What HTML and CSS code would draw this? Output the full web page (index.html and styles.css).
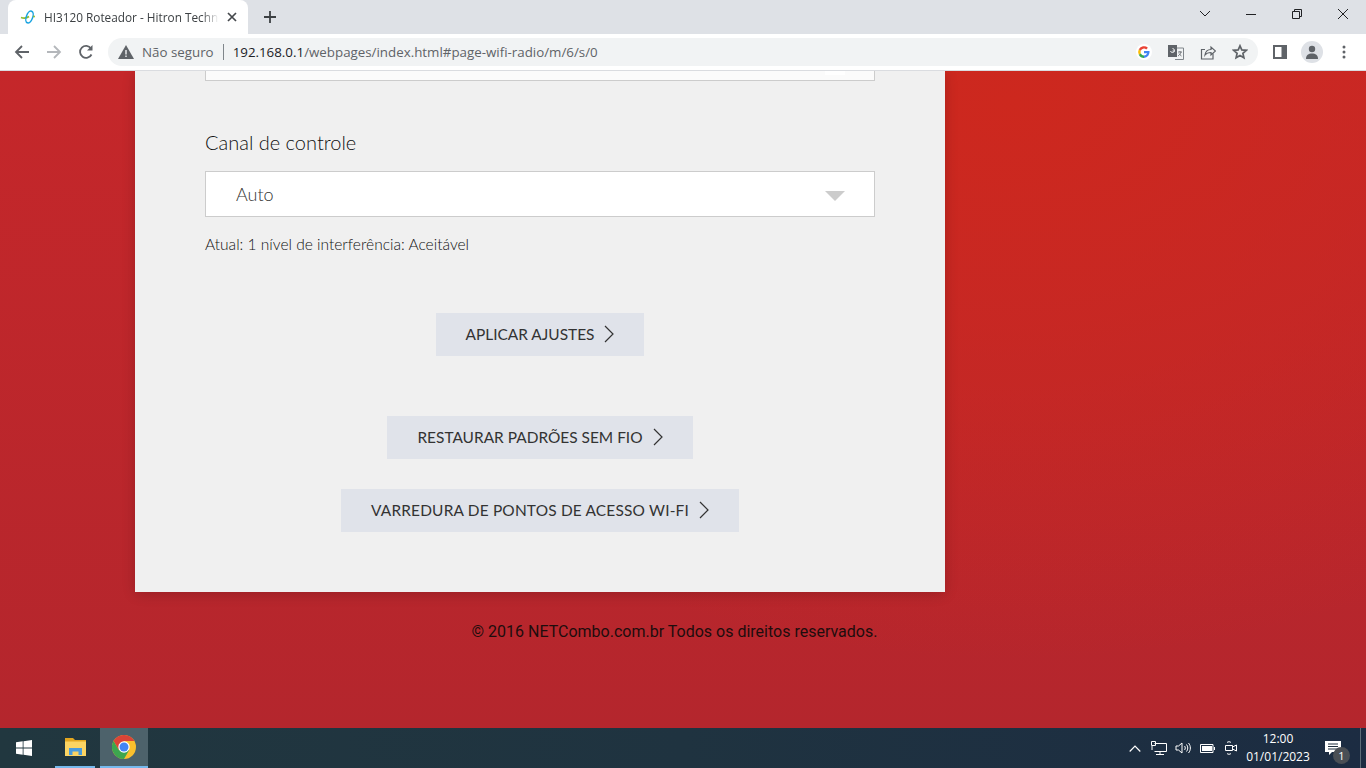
FILE: index.html
```html
<!DOCTYPE html>
<html lang="pt-BR">
<head>
    <meta charset="UTF-8">
    <title>HI3120 Roteador - Hitron Technologies</title>
    <link rel="stylesheet" href="styles.css">
</head>
<body>

    <div class="tabstrip">
        <div class="tab">
            <svg class="favicon" width="16" height="16" viewBox="0 0 16 16" fill="none">
                <path d="M1 8.500c3 1 6 .5 8-1" stroke="#8dbb2c" stroke-width="1.700"/>
                <ellipse cx="9.500" cy="8" rx="3.200" ry="6.200" transform="rotate(20 9.500 8)" stroke="#19a3e0" stroke-width="1.500"/>
                <circle cx="14" cy="7.500" r="1" fill="#8dbb2c"/>
            </svg>
            <span class="tab-title">HI3120 Roteador - Hitron Techno</span>
            <svg class="tab-close" width="10" height="10" viewBox="0 0 10 10"><path d="M1 1l8 8M9 1l-8 8" stroke="#45484c" stroke-width="1.700"/></svg>
        </div>
        <svg class="new-tab" width="12" height="12" viewBox="0 0 12 12"><path d="M6 0v12M0 6h12" stroke="#3c4043" stroke-width="1.800"/></svg>
        <div class="window-controls">
            <svg class="win-btn" width="46" height="14" viewBox="0 0 46 14" fill="none"><path d="M18 4l5 5 5-5" stroke="#202124"/></svg>
            <svg class="win-btn" width="46" height="14" viewBox="0 0 46 14" fill="none"><path d="M18 7.500h10" stroke="#202124"/></svg>
            <svg class="win-btn" width="46" height="14" viewBox="0 0 46 14" fill="none"><path d="M18.500 4.500h7v7h-7zM20.500 4.500v-2h7v7h-2" stroke="#202124"/></svg>
            <svg class="win-btn" width="46" height="14" viewBox="0 0 46 14" fill="none"><path d="M18 2l10 10M28 2L18 12" stroke="#202124"/></svg>
        </div>
    </div>

    <div class="toolbar">
        <svg class="nav-icon" width="16" height="16" viewBox="0 0 16 16" fill="none"><path d="M15 8H2M8 2L2 8l6 6" stroke="#5f6368" stroke-width="1.800"/></svg>
        <svg class="nav-icon" width="16" height="16" viewBox="0 0 16 16" fill="none"><path d="M1 8h13M8 2l6 6-6 6" stroke="#b4b7bb" stroke-width="1.800"/></svg>
        <svg class="nav-icon" width="16" height="16" viewBox="0 0 16 16" fill="none"><path d="M13.500 10.500A6 6 0 1 1 13 4.500" stroke="#5f6368" stroke-width="1.800"/><path d="M14.500 1v5.500H9z" fill="#5f6368"/></svg>
        <div class="omnibox">
            <svg class="warn" width="16" height="14" viewBox="0 0 16 14"><path d="M8 0l8 14H0z" fill="#5f6368"/><path d="M7.300 5h1.400v4.500H7.300zM7.300 10.500h1.400V12H7.300z" fill="#f1f3f4"/></svg>
            <span class="not-secure">Não seguro</span>
            <span class="url"><b>192.168.0.1</b>/webpages/index.html#page-wifi-radio/m/6/s/0</span>
            <div class="omni-icons">
                <svg width="16" height="16" viewBox="2 2 16 16">
                    <circle cx="10" cy="10" r="8" fill="#fff"/>
                    <path d="M15.500 9H10v2.200h3.200a3.400 3.400 0 0 1-3.200 2.200V16a6 6 0 0 0 5.500-7z" fill="#4285f4"/>
                    <path d="M10 13.400a3.400 3.400 0 0 1-3.200-2.200l-2 1.500A6 6 0 0 0 10 16z" fill="#34a853"/>
                    <path d="M6.800 11.200a3.400 3.400 0 0 1 0-2.400l-2-1.500a6 6 0 0 0 0 5.400z" fill="#fbbc05"/>
                    <path d="M6.800 8.800A3.400 3.400 0 0 1 12.200 7.400l1.700-1.700A6 6 0 0 0 4.800 7.300z" fill="#ea4335"/>
                </svg>
                <svg width="16" height="16" viewBox="0 0 16 16" fill="none"><path d="M6 4h9.500v11.500H7" stroke="#80868b"/><path d="M0 1h9v12H0z" fill="#5f6368"/><path d="M2.500 7a2 2 0 1 0 2-2.500M4.500 7H7" stroke="#f1f3f4"/><path d="M10 8h4M12 7v1M13 8c-.5 2-1.500 3-3 4M11 9.500c.500 1 1.500 2 2.500 2.500" stroke="#5f6368" stroke-width=".8"/></svg>
                <svg width="16" height="16" viewBox="0 0 16 16" fill="none"><path d="M13 9.500V15H1.500V5.500H5" stroke="#5f6368" stroke-width="1.200"/><path d="M5 11c.5-4 3-5.500 6-5.500V3l4.500 4-4.500 4V8.500C8.500 8.500 6.500 9 5 11z" stroke="#5f6368" stroke-width="1.200"/></svg>
                <svg width="16" height="16" viewBox="0 0 16 16" fill="none"><path d="M8 1.800l1.800 4.100 4.500.4-3.400 3 1 4.400L8 11.400l-3.900 2.300 1-4.400-3.400-3 4.500-.4z" stroke="#5f6368" stroke-width="1.700"/></svg>
            </div>
        </div>
        <svg class="side-panel" width="14" height="14" viewBox="0 0 14 14"><path d="M0 0h14v14H0z" fill="#5f6368"/><path d="M2 2h6.500v10H2z" fill="#fff"/></svg>
        <div class="avatar">
            <svg width="14" height="14" viewBox="0 0 14 14"><circle cx="7" cy="4" r="3.200" fill="#5f6368"/><path d="M1 14c0-4 2.500-5.500 6-5.500S13 10 13 14z" fill="#5f6368"/></svg>
        </div>
        <svg class="menu-dots" width="4" height="14" viewBox="0 0 4 14"><circle cx="2" cy="2" r="1.500" fill="#5f6368"/><circle cx="2" cy="7" r="1.500" fill="#5f6368"/><circle cx="2" cy="12" r="1.500" fill="#5f6368"/></svg>
    </div>

    <main class="page">
        <div class="card">
            <div class="select-stub"><i class="stub-arrow"></i></div>
            <label class="field-label">Canal de controle</label>
            <div class="select">
                <span>Auto</span>
                <i class="select-arrow"></i>
            </div>
            <p class="hint">Atual: 1 nível de interferência: Aceitável</p>

            <div class="actions apply">
                <a class="button">APLICAR AJUSTES <svg width="10" height="18" viewBox="0 0 10 18" fill="none"><path d="M1 1l8 8-8 8" stroke="#333" stroke-width="1.200"/></svg></a>
            </div>
            <div class="actions">
                <a class="button">RESTAURAR PADRÕES SEM FIO <svg width="10" height="18" viewBox="0 0 10 18" fill="none"><path d="M1 1l8 8-8 8" stroke="#333" stroke-width="1.200"/></svg></a>
                <a class="button wide">VARREDURA DE PONTOS DE ACESSO WI-FI <svg width="10" height="18" viewBox="0 0 10 18" fill="none"><path d="M1 1l8 8-8 8" stroke="#333" stroke-width="1.200"/></svg></a>
            </div>
        </div>
        <div class="footer">© 2016 NETCombo.com.br Todos os direitos reservados.</div>
    </main>

    <div class="taskbar">
        <svg class="start" width="16" height="16" viewBox="0 0 16 16"><path d="M0 2.300l6.700-1v6.300H0zM7.500 1.200L16 0v7.600H7.500zM0 8.400h6.700v6.300l-6.700-1zM7.500 8.400H16V16l-8.500-1.200z" fill="#fff"/></svg>
        <div class="task-item running">
            <svg width="21" height="18" viewBox="0 0 21 18"><path d="M0 0h8l2 2h11v16H0z" fill="#e3a61f"/><path d="M0 3.500h21V18H0z" fill="#fcd462"/><path d="M4 17v-7h13v7h-3.500v-3.500h-6V17z" fill="#4a9bdc"/></svg>
        </div>
        <div class="task-item active">
            <svg width="24" height="24" viewBox="0 0 24 24">
                <circle cx="12" cy="12" r="12" fill="#fbc02d"/>
                <path d="M22.400 6A12 12 0 0 0 1.600 6l5.200 9L12 6z" fill="#db4437"/>
                <path d="M1.600 6A12 12 0 0 0 12 24l5.200-9H6.800z" fill="#3da64f"/>
                <circle cx="12" cy="12" r="5.700" fill="#fff"/>
                <circle cx="12" cy="12" r="4.500" fill="#4285f4"/>
            </svg>
        </div>
        <div class="tray">
            <span class="tray-icon"><svg width="12" height="7" viewBox="0 0 12 7" fill="none"><path d="M.7 6.500L6 1.200l5.300 5.300" stroke="#fff" stroke-width="1.200"/></svg></span>
            <span class="tray-icon"><svg width="16" height="14" viewBox="0 0 16 14" fill="none"><path d="M3.500 2.500h12v8h-12M9 10.500v3M5 13.500h8" stroke="#fff"/><path d="M.5.500h4v4h-4zM1 5v4" stroke="#fff"/></svg></span>
            <span class="tray-icon"><svg width="16" height="14" viewBox="0 0 16 14" fill="none"><path d="M1 5h2.500L7 2v10L3.500 9H1zM9.500 5c1 1 1 3 0 4M11.500 3.500c1.700 2 1.700 5 0 7M13.500 2c2.500 3 2.500 7 0 10" stroke="#fff"/></svg></span>
            <span class="tray-icon"><svg width="15" height="9" viewBox="0 0 15 9"><path d="M.5.500h12.500v8H.5z" fill="none" stroke="#fff"/><path d="M2 2h10v5H2zM14 3h1v3h-1z" fill="#fff"/></svg></span>
            <span class="tray-icon"><svg width="12" height="16" viewBox="0 0 12 16" fill="none"><path d="M.5 5.500h7v5h-7zM7.500 7l4-2v6l-4-2M2 2.500c1-1 3-1 4 0M2 13.500c1 1 3 1 4 0" stroke="#fff"/></svg></span>
        </div>
        <div class="clock">
            <span>12:00</span>
            <span>01/01/2023</span>
        </div>
        <div class="notif">
            <svg width="16" height="14" viewBox="0 0 16 14"><path d="M0 0h16v11H7l-3 3v-3H0z" fill="#fff"/><path d="M3 3h10M3 5.500h10M3 8h10" stroke="#1f2f3f"/></svg>
            <span class="notif-badge">1</span>
        </div>
    </div>

</body>
</html>
```

FILE: styles.css
```css
* {
    box-sizing: border-box;
}

body {
    margin: 0;
    width: 1366px;
    height: 768px;
    overflow: hidden;
    display: flex;
    flex-direction: column;
    font-family: 'Open Sans', sans-serif;
}

svg {
    display: block;
    flex-shrink: 0;
}

/* browser chrome */
.tabstrip {
    height: 34px;
    background: #dee1e6;
    display: flex;
    align-items: center;
    padding-left: 8px;
}

.tab {
    width: 240px;
    height: 34px;
    background: #fff;
    border-radius: 8px 8px 0 0;
    display: flex;
    align-items: center;
    padding: 0 0 0 12px;
    font-size: 12px;
    color: #3c4043;
}

.favicon {
    margin-right: 8px;
}

.tab-title {
    width: 175px;
    font-size: 11.8px;
    white-space: nowrap;
    -webkit-mask-image: linear-gradient(to right, #000 90%, transparent);
    mask-image: linear-gradient(to right, #000 90%, transparent);
}

.tab-close {
    margin-left: 8px;
}

.new-tab {
    margin-left: 16px;
}

.window-controls {
    margin-left: auto;
    display: flex;
    margin-bottom: 6px;
}

.toolbar {
    height: 37px;
    background: #fff;
    border-bottom: 1px solid #dadce0;
    display: flex;
    align-items: center;
    padding-left: 14px;
}

.nav-icon {
    margin-right: 16px;
}

.omnibox {
    width: 1150px;
    height: 28px;
    margin-left: -2px;
    background: #f1f3f4;
    border-radius: 14px;
    display: flex;
    align-items: center;
    padding-left: 10px;
    font-size: 13.33px;
    color: #5f6368;
}

.warn {
    margin-right: 8px;
}

.not-secure {
    padding-right: 9px;
    border-right: 1px solid #80868b;
    line-height: 16px;
    margin-right: 9px;
}

.url b {
    font-weight: 400;
    color: #202124;
}

.omni-icons {
    margin-left: auto;
    display: flex;
    align-items: center;
    gap: 16px;
    padding-right: 10px;
}

.side-panel {
    margin-left: 15px;
}

.avatar {
    width: 22px;
    height: 22px;
    border-radius: 50%;
    background: #dee1e6;
    margin-left: 14px;
    display: flex;
    align-items: center;
    justify-content: center;
    overflow: hidden;
}

.menu-dots {
    margin-left: 19px;
}

/* router page */
.page {
    flex: 1;
    overflow: hidden;
    background:
        radial-gradient(800px 560px at 1010px 30px, #cd281e, rgba(205, 40, 30, 0)),
        linear-gradient(180deg, #c5272a 0%, #b4262d 100%);
}

.card {
    width: 810px;
    margin-left: 135px;
    background: #f0f0f0;
    box-shadow: 0 2px 12px rgba(0, 0, 0, 0.18);
    padding: 0 70px 60px;
    font-family: 'Lato', sans-serif;
    font-weight: 300;
    color: #111;
}

.select-stub {
    height: 10px;
    background: #fbfbfb;
    border: 1px solid #ccc;
    border-top: none;
    display: flex;
    justify-content: flex-end;
    padding-right: 29px;
}

.stub-arrow {
    width: 20px;
    height: 4px;
    background: #fff;
}

.field-label {
    display: block;
    margin-top: 49px;
    margin-bottom: 17px;
    font-size: 20px;
    line-height: 24px;
}

.select {
    height: 46px;
    background: #fff;
    border: 1px solid #ccc;
    display: flex;
    align-items: center;
    justify-content: space-between;
    padding: 0 29px 0 30px;
    font-size: 18px;
    color: #333;
}

.select-arrow {
    width: 0;
    height: 0;
    margin-top: 4px;
    border-left: 10px solid transparent;
    border-right: 10px solid transparent;
    border-top: 10px solid #ccc;
}

.hint {
    margin: 17px 0 0;
    padding-bottom: 1px;
    font-size: 15.55px;
    line-height: 20px;
}

.actions {
    display: flex;
    flex-direction: column;
    align-items: center;
    gap: 30px;
    margin-top: 60px;
}

.actions.apply {
    margin-top: 58px;
}

.button {
    height: 43px;
    padding: 0 30px 2px;
    background: #e0e3ea;
    display: flex;
    align-items: center;
    gap: 10px;
    font-size: 15.45px;
    font-weight: 400;
    color: #333;
    white-space: nowrap;
}

.button.wide {
    letter-spacing: 0.18px;
}

.footer {
    margin-top: 30px;
    padding-right: 17px;
    text-align: center;
    font-family: 'Roboto', sans-serif;
    font-size: 16px;
    line-height: 20px;
    color: #1d0d0d;
}

/* windows taskbar */
.taskbar {
    height: 40px;
    background: linear-gradient(to right, #21373f 0%, #1f3340 50%, #1c2c42 100%);
    display: flex;
    align-items: center;
    color: #fff;
}

.start {
    margin: 0 16px;
}

.task-item {
    width: 48px;
    height: 40px;
    display: flex;
    align-items: center;
    justify-content: center;
    border-bottom: 2px solid #76b9ed;
}

.task-item.running {
    width: 40px;
    margin: 0 5px 0 7px;
}

.task-item.active {
    background: #4d626b;
}

.tray {
    margin-left: auto;
    display: flex;
    align-items: center;
}

.tray-icon {
    width: 24px;
    display: flex;
    justify-content: center;
}

.clock {
    width: 70px;
    display: flex;
    flex-direction: column;
    align-items: center;
    font-size: 12px;
    line-height: 18px;
}

.notif {
    position: relative;
    width: 48px;
    height: 40px;
    display: flex;
    align-items: center;
    padding-left: 12px;
    border-right: 1px solid #5c6c78;
    margin-right: 5px;
}

.notif-badge {
    position: absolute;
    left: 20px;
    top: 19px;
    width: 17px;
    height: 17px;
    border-radius: 50%;
    background: #4a4f55;
    font-size: 11px;
    line-height: 17px;
    text-align: center;
}
```
